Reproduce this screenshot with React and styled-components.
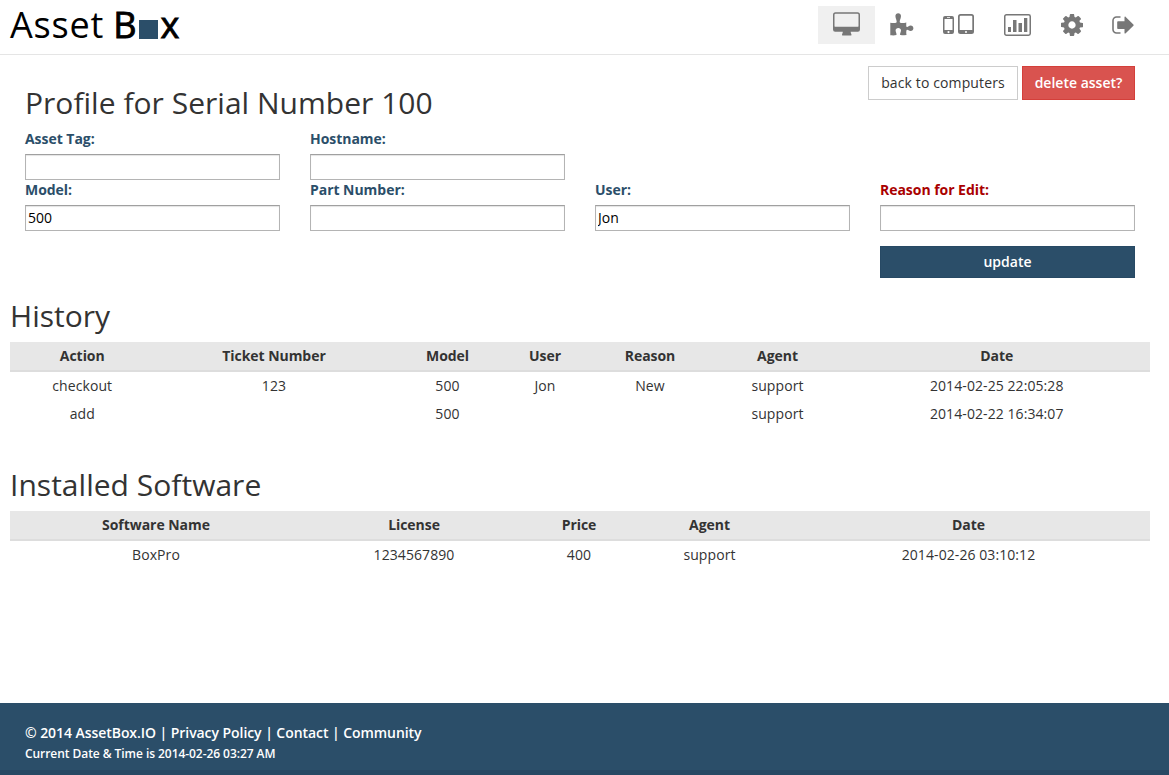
import React from "react";
import styled, { createGlobalStyle } from "styled-components";

const Global = createGlobalStyle`
  * { box-sizing: border-box; }
  body {
    margin: 0;
    background: #fff;
    color: #333;
    font: 14px/20px "Open Sans", "Noto Sans", sans-serif;
  }
`;

const Page = styled.div`
  height: 775px;
  display: flex;
  flex-direction: column;
  overflow: hidden;
`;

const TopBar = styled.header`
  height: 55px;
  flex: none;
  display: flex;
  justify-content: space-between;
  align-items: flex-start;
  padding: 0 21px 0 10px;
  border-bottom: 1px solid #e5e5e5;
`;

const Brand = styled.div`
  display: flex;
  align-items: baseline;
  color: #000;
  font-size: 36px;
  line-height: 50px;
  letter-spacing: 0.8px;
  white-space: pre;
`;

const BrandStrong = styled.span`
  margin-left: ${(p) => p.$shift || 0}px;
  letter-spacing: 0;
  -webkit-text-stroke: 0.9px #000;
`;

const BrandBox = styled.span`
  width: 19px;
  height: 19px;
  margin: 0 3px 0 2px;
  transform: translateY(1px);
  background: #2b4e69;
`;

const Nav = styled.nav`
  display: flex;
  margin-top: 6px;
`;

const NavItem = styled.a`
  width: ${(p) => p.$width}px;
  height: 38px;
  display: flex;
  justify-content: center;
  padding-top: ${(p) => p.$top}px;
  color: #777;
  background: ${(p) => (p.$active ? "#f0f0f0" : "transparent")};
  svg { display: block; }
`;

const Profile = styled.section`
  height: 239px;
  flex: none;
  padding: 11px 34px 0 25px;
`;

const ProfileHead = styled.div`
  height: 63px;
  display: flex;
  justify-content: space-between;
`;

const Title = styled.h1`
  margin: 0;
  padding-top: ${(p) => p.$top || 0}px;
  font-size: 30px;
  line-height: 33px;
  font-weight: 400;
  letter-spacing: 0.02px;
  white-space: nowrap;
`;

const Actions = styled.div`
  display: flex;
  gap: 4px;
`;

const Button = styled.button`
  width: ${(p) => p.$width}px;
  height: 34px;
  padding: 0;
  border: 1px solid ${(p) => (p.$danger ? "#d43f3a" : "#ccc")};
  background: ${(p) => (p.$danger ? "#d9534f" : "#fff")};
  color: ${(p) => (p.$danger ? "#fff" : "#333")};
  font: ${(p) => (p.$danger ? 600 : 400)} 14px/20px "Open Sans", sans-serif;
  letter-spacing: ${(p) => (p.$danger ? 0 : 0.12)}px;
`;

const Form = styled.form`
  display: grid;
  grid-template-columns: repeat(4, 255px);
  column-gap: 30px;
  grid-auto-rows: 51px;
`;

const Field = styled.label`
  grid-column: ${(p) => p.$col};
  grid-row: ${(p) => p.$row};
  display: flex;
  flex-direction: column;
  gap: 5px;
  color: ${(p) => (p.$required ? "#a90000" : "#2b4e69")};
  font-weight: 700;
  letter-spacing: -0.04px;
`;

const Input = styled.input`
  height: 26px;
  padding: 0 2px 2px;
  border: 1px solid #b4b4b4;
  border-top-color: #a0a0a0;
  border-radius: 0;
  box-shadow: inset 0 1px 1px #e4e4e4;
  color: #000;
  font: 14px "Open Sans", sans-serif;
  outline: none;
`;

const Update = styled.button`
  grid-column: 4;
  grid-row: 3;
  height: 32px;
  margin-top: 15px;
  padding: 0;
  border: 1px solid #274964;
  background: #2b4e69;
  color: #fff;
  font: 600 14px/20px "Open Sans", sans-serif;
`;

const Records = styled.section`
  height: ${(p) => p.$height}px;
  flex: none;
  padding: 5px 19px 0 10px;
`;

const Table = styled.table`
  width: 1140px;
  margin-top: 10px;
  table-layout: fixed;
  border-spacing: 0;
  text-align: center;
`;

const Th = styled.th`
  width: ${(p) => p.$width}px;
  height: 30px;
  padding: 0;
  background: #e7e7e7;
  border-bottom: 2px solid #ddd;
  font-weight: 700;
  letter-spacing: -0.05px;
`;

const Td = styled.td`
  height: 28px;
  padding: 0;
  letter-spacing: 0.08px;
`;

const Footer = styled.footer`
  height: 72px;
  flex: none;
  margin-top: auto;
  padding: 20px 25px 0;
  background: #2b4e69;
  border-bottom: 5px solid #274863;
  color: #fff;
  font-weight: 600;
  letter-spacing: -0.06px;
`;

const Links = styled.div`
  line-height: 20px;
`;

const Clock = styled.div`
  font-size: 12px;
  line-height: 22px;
`;

const DesktopIcon = () => (
  <svg width="28" height="24" viewBox="0 0 28 24" fill="currentColor">
    <path fillRule="evenodd" d="M2.500 0.200h22A2.500 2.500 0 0 1 27 2.700v14.800a2.200 2.200 0 0 1-2.200 2.200h-7.100c0 1.500.8 2.200.8 3 0 .6-.4.9-.9.9H9.900c-.5 0-.9-.3-.9-.9 0-.8.8-1.500.8-3H2.200A2.200 2.200 0 0 1 0 17.500V2.700A2.500 2.500 0 0 1 2.500.2ZM2.500 1.700a1 1 0 0 0-1 1v11.500c0 .3.200.5.500.5h23c.3 0 .5-.2.500-.5V2.700a1 1 0 0 0-1-1Z" />
  </svg>
);

const PuzzleIcon = () => (
  <svg width="24" height="23" viewBox="0 0 24 23" fill="currentColor">
    <path d="M0.300 9.800C2.800 10.300 5.500 10.200 6.500 9.500C7.400 8.200 5.400 6 5.400 3.100C5.400 1.300 6.600 0.200 8.200 0.200C9.800 0.200 11 1.300 11 3.100C11 6 9 8.200 9.900 9.500C10.900 10.200 13.600 10.200 16.300 9.500C16.300 11.300 16 13.300 16.700 13.900C17.800 14.600 18.700 12.600 20.600 12.600C22.300 12.600 23.400 13.800 23.400 15.300C23.400 16.900 22.300 18 20.600 18C18.700 18 17.700 16.300 16.700 17C16.100 17.700 16.200 19.900 16.500 21.900C14.500 21.900 12 22.500 10.300 22.100C9.300 21.300 11 19.300 11 17.500C11 15.900 9.900 15 8.300 15C6.700 15 5.600 15.900 5.600 17.500C5.600 19.300 7.300 21.300 6.300 22.100C4.500 22.500 2 22.400 0.300 22.200Z" />
  </svg>
);

const DevicesIcon = () => (
  <svg width="31" height="20" viewBox="0 0 31 20" fill="currentColor">
    <path fillRule="evenodd" d="M2 2h7a2 2 0 0 1 2 2v14a2 2 0 0 1-2 2H2a2 2 0 0 1-2-2V4a2 2 0 0 1 2-2ZM1.500 5v11h8V5ZM4 3.200v.7h3v-.7ZM5.500 17a1.100 1.100 0 1 0 0 2.200 1.100 1.100 0 0 0 0-2.200Z" />
    <path fillRule="evenodd" d="M17.500 0h11A2.500 2.500 0 0 1 31 2.500v15a2.500 2.500 0 0 1-2.500 2.500h-11a2.500 2.500 0 0 1-2.500-2.500v-15A2.500 2.500 0 0 1 17.500 0ZM17.700 1.700a1 1 0 0 0-1 1V16h12.600V2.700a1 1 0 0 0-1-1ZM23 17a1 1 0 0 0 0 2 1 1 0 0 0 0-2Z" />
  </svg>
);

const ChartIcon = () => (
  <svg width="27" height="22" viewBox="0 0 27 22" fill="currentColor">
    <rect x="0.750" y="0.750" width="25.500" height="20.500" rx="1.700" fill="none" stroke="currentColor" strokeWidth="1.500" />
    <path d="M4 13h3v5H4zM9 6h3.500v12H9zM14.500 9H18v9h-3.500zM20 4h3.300v14H20z" />
  </svg>
);

const GearIcon = () => (
  <svg width="22" height="22" viewBox="0 0 1536 1536" fill="currentColor">
    <path d="M1024 768q0-106-75-181t-181-75-181 75-75 181 75 181 181 75 181-75 75-181zm512-109v222q0 12-8 23t-20 13l-185 28q-19 54-39 91 35 50 107 138 10 12 10 25t-9 23q-27 37-99 108t-94 71q-12 0-26-9l-138-108q-44 23-91 38-16 136-29 186-7 28-36 28H657q-14 0-24.500-8.500T621 1506l-28-184q-49-16-90-37l-141 107q-10 9-25 9-14 0-25-11-126-114-165-168-7-10-7-23 0-12 8-23 15-21 51-66.500t54-70.500q-27-50-41-99L29 913q-13-2-21-12.500T0 877V655q0-12 8-23t19-13l186-28q14-46 39-92-40-57-107-138-10-12-10-24 0-10 9-23 26-36 98.500-107.500T337 135q13 0 26 10l138 107q44-23 91-38 16-136 29-186 7-28 36-28h222q14 0 24.500 8.500T915 30l28 184q49 16 90 37l142-107q9-9 24-9 13 0 25 10 129 119 165 170 7 8 7 22 0 12-8 23-15 21-51 66.500t-54 70.500q26 50 41 98l183 28q13 2 21 12.500t8 23.500z" />
  </svg>
);

const LeaveIcon = () => (
  <svg width="22" height="19" viewBox="0 0 22 19" fill="currentColor">
    <path d="M8.500 1H4.500A3.500 3.500 0 0 0 1 4.500v9A3.500 3.500 0 0 0 4.500 17h4" fill="none" stroke="currentColor" strokeWidth="1.600" />
    <path d="M6 5.200h6.500V1.300c0-.8.600-1 1.200-.4l7.700 7.500c.4.400.4.900 0 1.300l-7.700 7.600c-.6.600-1.200.3-1.200-.4V13H6c-.5 0-.8-.3-.8-.8V6c0-.5.300-.8.800-.8Z" />
  </svg>
);

const RecordTable = ({ columns, rows }) => (
  <Table>
    <thead>
      <tr>{columns.map(([name, width]) => <Th key={name} $width={width}>{name}</Th>)}</tr>
    </thead>
    <tbody>
      {rows.map((row, i) => <tr key={i}>{row.map((cell, j) => <Td key={j}>{cell}</Td>)}</tr>)}
    </tbody>
  </Table>
);

const fields = [
  { name: "Asset Tag:", col: 1, row: 1, value: "" },
  { name: "Hostname:", col: 2, row: 1, value: "" },
  { name: "Model:", col: 1, row: 2, value: "500" },
  { name: "Part Number:", col: 2, row: 2, value: "" },
  { name: "User:", col: 3, row: 2, value: "Jon" },
  { name: "Reason for Edit:", col: 4, row: 2, value: "", required: true },
];

const historyColumns = [["Action", 144.5], ["Ticket Number", 239], ["Model", 108], ["User", 87], ["Reason", 123], ["Agent", 132], ["Date", 306.5]];
const historyRows = [
  ["checkout", "123", "500", "Jon", "New", "support", "2014-02-25 22:05:28"],
  ["add", "", "500", "", "", "support", "2014-02-22 16:34:07"],
];
const softwareColumns = [["Software Name", 292], ["License", 224], ["Price", 106], ["Agent", 155], ["Date", 363]];
const softwareRows = [["BoxPro", "1234567890", "400", "support", "2014-02-26 03:10:12"]];

export default function App() {
  return (
    <Page>
      <Global />
      <TopBar>
        <Brand>Asset <BrandStrong $shift={-1}>B</BrandStrong><BrandBox /><BrandStrong>x</BrandStrong></Brand>
        <Nav>
          <NavItem $width={57} $top={6} $active><DesktopIcon /></NavItem>
          <NavItem $width={53} $top={7}><PuzzleIcon /></NavItem>
          <NavItem $width={61} $top={8}><DevicesIcon /></NavItem>
          <NavItem $width={57} $top={8}><ChartIcon /></NavItem>
          <NavItem $width={52} $top={8}><GearIcon /></NavItem>
          <NavItem $width={50} $top={10}><LeaveIcon /></NavItem>
        </Nav>
      </TopBar>
      <Profile>
        <ProfileHead>
          <Title $top={20}>Profile for Serial Number 100</Title>
          <Actions>
            <Button $width={150}>back to computers</Button>
            <Button $width={113} $danger>delete asset?</Button>
          </Actions>
        </ProfileHead>
        <Form>
          {fields.map((f) => (
            <Field key={f.name} $col={f.col} $row={f.row} $required={f.required}>
              {f.name}
              <Input defaultValue={f.value} />
            </Field>
          ))}
          <Update type="button">update</Update>
        </Form>
      </Profile>
      <Records $height={169}>
        <Title as="h2">History</Title>
        <RecordTable columns={historyColumns} rows={historyRows} />
      </Records>
      <Records $height={141}>
        <Title as="h2">Installed Software</Title>
        <RecordTable columns={softwareColumns} rows={softwareRows} />
      </Records>
      <Footer>
        <Links>© 2014 AssetBox.IO | Privacy Policy | Contact | Community</Links>
        <Clock>Current Date &amp; Time is 2014-02-26 03:27 AM</Clock>
      </Footer>
    </Page>
  );
}
